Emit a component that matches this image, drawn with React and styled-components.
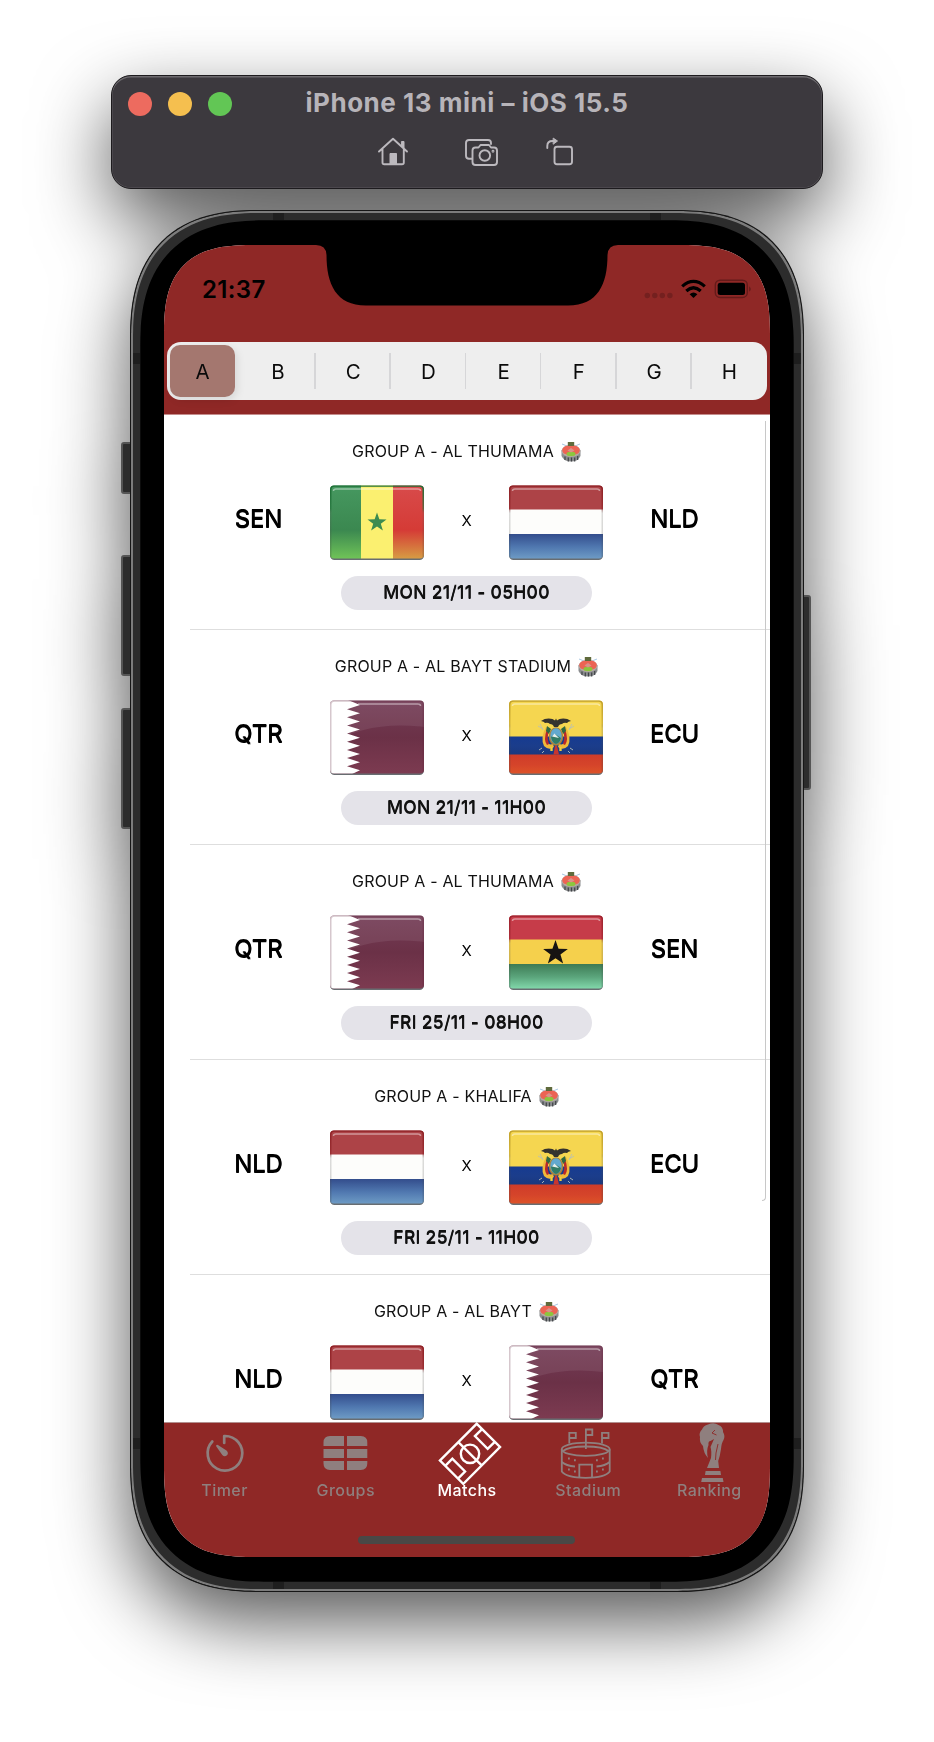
import React from "react";
import styled, { createGlobalStyle } from "styled-components";

const RED = "#8f2826";
const MUTED = "#8f7f7e";

const GlobalStyle = createGlobalStyle`
  * { box-sizing: border-box; }
  html, body { margin: 0; background: #fff; }
  body { font-family: Inter, "Liberation Sans", sans-serif; color: #000; }
  svg { display: block; flex: none; }
`;

const Desktop = styled.main`
  width: 934px;
  height: 1742px;
  padding-top: 75px;
  overflow: hidden;
  background: #fff;
`;

const Simulator = styled.div`
  display: flex;
  flex-direction: column;
  align-items: center;
  gap: 21px;
  filter: drop-shadow(0 30px 37px rgba(0, 0, 0, 0.66));
`;

const WindowBar = styled.header`
  width: 712px;
  height: 114px;
  border-radius: 20px;
  background: #3c393e;
  border: 1px solid #1d1b1e;
  box-shadow: inset 0 1.5px 0 #6d6a6e, inset 0 0 0 0.5px #5a575c;
`;

const TitleRow = styled.div`
  display: grid;
  grid-template-columns: 1fr auto 1fr;
  align-items: center;
  height: 56px;
  padding: 0 16px;
`;

const Lights = styled.div`
  display: flex;
  gap: 16px;
`;

const Light = styled.span`
  width: 24px;
  height: 24px;
  border-radius: 50%;
  background: ${(p) => p.$color};
`;

const WindowTitle = styled.h1`
  margin: -2px 0 0;
  font-size: 26px;
  font-weight: 650;
  letter-spacing: 0.52px;
  line-height: 30px;
  color: #b7b4b9;
  white-space: nowrap;
`;

const ToolRow = styled.div`
  display: flex;
  justify-content: center;
  padding: 4px 0 0 17px;
`;

const ToolIcon = styled.svg`
  width: ${(p) => p.$w}px;
  height: 31px;
  margin-right: ${(p) => p.$gap || 0}px;
  overflow: visible;
  fill: none;
  stroke: #bcb9be;
  stroke-width: 1.9;
  stroke-linejoin: round;
  stroke-linecap: round;
`;

const Phone = styled.section`
  position: relative;
  width: 674px;
  height: 1382px;
  padding: 34px 33px;
  border: 1px solid #161616;
  border-radius: 108px;
  @supports (corner-shape: superellipse(1.3)) {
    border-radius: 128px;
    corner-shape: superellipse(1.3);
  }
  background: #000;
  box-shadow: inset 0 0 0 2px #7c7c7c, inset 0 0 0 9.3px #2c2c2c;
`;

const SideButton = styled.i`
  position: absolute;
  z-index: -1;
  top: ${(p) => p.$top}px;
  ${(p) => p.$side}: ${(p) => (p.$side === "left" ? -10 : -8)}px;
  width: 14px;
  height: ${(p) => p.$h}px;
  border-radius: 3px;
  background: #2c2c2c;
  border: 2px solid #555;
`;

const Antenna = styled.i`
  position: absolute;
  width: ${(p) => (p.$flat ? 11 : 7)}px;
  height: ${(p) => (p.$flat ? 7 : 11)}px;
  background: #1e1e1e;
  ${(p) => p.$v}: ${(p) => p.$y}px;
  ${(p) => p.$h}: ${(p) => p.$x}px;
`;

const Screen = styled.div`
  position: relative;
  display: flex;
  flex-direction: column;
  width: 606px;
  height: 1312px;
  border-radius: 76px;
  @supports (corner-shape: superellipse(1.5)) {
    border-radius: 92px;
    corner-shape: superellipse(1.5);
  }
  overflow: hidden;
  background: #fff;
`;

const Notch = styled.svg`
  position: absolute;
  top: -1px;
  left: 152px;
  width: 302px;
  height: 62px;
`;

const AppHeader = styled.div`
  height: 170px;
  background: ${RED};
  border-bottom: 1px solid #c58d8c;
`;

const StatusBar = styled.div`
  display: flex;
  justify-content: space-between;
  height: 97px;
  padding: 30px 19px 0 38px;
`;

const Clock = styled.span`
  font-size: 24px;
  font-weight: 580;
  line-height: 30px;
  letter-spacing: 0.35px;
`;

const StatusIcons = styled.svg`
  width: 109px;
  height: 30px;
  margin-right: -1px;
`;

const Segments = styled.nav`
  display: flex;
  height: 58px;
  margin: 0 3px;
  border-radius: 14px;
  background: #eee;
`;

const Segment = styled.button`
  position: relative;
  flex: 1;
  padding: 3px 5px 3px ${(p) => (p.$first ? 3 : 5)}px;
  border: 0;
  background: none;
  font: 430 20.5px/53px Inter, sans-serif;
  color: #0a0a0a;
  &::after {
    content: "";
    position: absolute;
    right: 0;
    top: 11px;
    width: 1.5px;
    height: 36px;
    background: ${(p) => (p.$divider ? "#d6d6d8" : "transparent")};
  }
`;

const SegmentLabel = styled.span`
  display: block;
  height: 52px;
  border-radius: 10px;
  background: ${(p) => (p.$on ? "#a4776f" : "transparent")};
  box-shadow: ${(p) => (p.$on ? "2px 3px 8px rgba(0,0,0,.1)" : "none")};
`;

const MatchList = styled.div`
  position: relative;
  flex: 1;
  min-height: 0;
  overflow: hidden;
`;

const ScrollEdge = styled.i`
  position: absolute;
  top: 6px;
  right: 4px;
  width: 4px;
  height: 780px;
  border-right: 1px solid #c8c8c8;
  border-bottom: 1px solid #c8c8c8;
  border-bottom-right-radius: 4px;
`;

const MatchRow = styled.article`
  display: flex;
  flex-direction: column;
  align-items: center;
  height: 215px;
  padding: 26px 1px 0 0;
  background: linear-gradient(#dedede, #dedede) 26px 100% / 100% 1px no-repeat;
`;

const Venue = styled.div`
  display: flex;
  align-items: center;
  gap: 7px;
  height: 21px;
  font-size: 16px;
  letter-spacing: 0.18px;
  line-height: 21px;
  white-space: nowrap;
  color: #111;
`;

const Fixture = styled.div`
  display: grid;
  grid-template-columns: 143px 94px 1fr 94px 143px;
  align-items: center;
  justify-items: center;
  width: 559px;
  height: 75px;
  margin: 23px 0 16px;
`;

const Team = styled.span`
  font-size: 24px;
  font-weight: 480;
  letter-spacing: -0.2px;
  line-height: 30px;
  margin-top: -8px;
  text-shadow: 0 0.9px 0 #000;
`;

const Versus = styled.span`
  font-size: 15px;
  line-height: 20px;
  margin-top: -3px;
`;

const Kickoff = styled.time`
  width: 251px;
  height: 34px;
  border-radius: 17px;
  background: #e4e3e9;
  text-align: center;
  font-size: 17.5px;
  font-weight: 550;
  letter-spacing: 0.3px;
  line-height: 32px;
  color: #111;
  text-shadow: 0 0.8px 0 #111;
`;

const TabBar = styled.nav`
  display: grid;
  grid-template-columns: repeat(5, 1fr);
  grid-template-rows: 113px auto;
  height: 135px;
  background: ${RED};
  box-shadow: inset 0 1px 0 #b28f8e;
  position: relative;
`;

const Tab = styled.button`
  display: flex;
  flex-direction: column;
  align-items: center;
  padding: 0;
  border: 0;
  background: none;
  color: ${(p) => (p.$on ? "#fff" : MUTED)};
  font: 500 16px/20px Inter, sans-serif;
  letter-spacing: 0.45px;
`;

const TabIcon = styled.svg`
  width: 64px;
  height: 58px;
  overflow: visible;
  fill: none;
  stroke: currentColor;
  stroke-width: 1.8;
`;

const HomeIndicator = styled.i`
  grid-column: 1 / -1;
  justify-self: center;
  width: 217px;
  height: 8.5px;
  margin-top: 0.5px;
  border-radius: 5px;
  background: #494846;
`;

const FlagSvg = styled.svg`
  width: 94px;
  height: 75px;
  overflow: visible;
`;

function starPoints(cx, cy, r) {
  return Array.from({ length: 10 }, (_, i) => {
    const a = -Math.PI / 2 + (i * Math.PI) / 5;
    const k = i % 2 ? r * 0.4 : r;
    return `${(cx + k * Math.cos(a)).toFixed(2)},${(cy + k * Math.sin(a)).toFixed(2)}`;
  }).join(" ");
}

const paints = {
  SEN: (id) => (
    <>
      <rect width="31" height="75" fill={`url(#${id}a)`} />
      <rect x="31" width="32" height="75" fill="#fbf070" />
      <rect x="63" width="31" height="75" fill={`url(#${id}b)`} />
      <polygon points={starPoints(47, 37.5, 10)} fill="#3c8c50" />
    </>
  ),
  NLD: (id) => (
    <>
      <rect width="94" height="25" fill="#ad4347" />
      <rect y="24.5" width="94" height="25" fill="#fdfdfb" />
      <rect y="49" width="94" height="26" fill={`url(#${id}a)`} />
    </>
  ),
  QTR: (id) => (
    <>
      <rect width="94" height="75" fill={`url(#${id}a)`} />
      <path d="M0 44Q40 20 94 27V0H0Z" fill="#fff" opacity=".08" />
      <path
        d={
          "M0 0H18L30 5 " +
          Array.from({ length: 9 }, (_, i) => `L17 ${i * 8.15 + 1} L30 ${i * 8.15 + 5.1}`).join(" ") +
          " L20 75H0Z"
        }
        fill="#fff"
      />
    </>
  ),
  ECU: (id) => (
    <>
      <rect width="94" height="37" fill="#f5d650" />
      <rect y="36.5" width="94" height="19" fill={`url(#${id}b)`} />
      <rect y="54.5" width="94" height="20.5" fill={`url(#${id}a)`} />
      <path d="M37 27Q31 38 35 46Q40 51 45 47L44 44Q38 46 38 39Q37 33 41 28Z" fill="#efb93a" />
      <path d="M57 27Q63 38 59 46Q54 51 49 47L50 44Q56 46 56 39Q57 33 53 28Z" fill="#efb93a" />
      <path d="M38 29Q34 40 38 45L40 44Q37 37 41 29ZM56 29Q60 40 56 45L54 44Q57 37 53 29Z" fill="#b9292b" />
      <path d="M38 26L42 29L40 34L37 31ZM56 26L52 29L54 34L57 31Z" fill="#2f6843" />
      <ellipse cx="47" cy="36.5" rx="7.2" ry="9.3" fill="#a8813c" />
      <ellipse cx="47" cy="36" rx="5.7" ry="7.8" fill="#62a9cf" />
      <path d="M42 37L46 34L52 38Q51 43 47 44Q43 43 42 37Z" fill="#327c65" />
      <path d="M43 36.5L45.5 33.5L50 38Z" fill="#e7eeee" />
      <path d="M32 21Q37 17.5 43.5 19L46 20.5L47 18.5L48 20.5L50.5 19Q57 17.5 62 21Q59 21.5 58 23Q55 22 53 24Q50 24 49 27H45Q44 24 41 24Q39 22 36 23Q35 21.5 32 21Z" fill="#34332e" />
      <path d="M46 46H48L50 54.5H44.5Z" fill="#c8352f" />
      <path d="M42.5 47v4M51.5 47v4" stroke="#f0ce3c" strokeWidth="2.4" />
      <path d="M29 26l5 3M31 24l3 6M65 26l-5 3M63 24l-3 6M30 50l3-2M33 53l2-2M64 50l-3-2M61 53l-2-2" stroke="#b9bfb7" strokeWidth=".9" />
    </>
  ),
  GHA: (id) => (
    <>
      <rect width="94" height="25" fill="#c63c49" />
      <rect y="24.5" width="94" height="25" fill="#f5d04c" />
      <rect y="49" width="94" height="26" fill={`url(#${id}a)`} />
      <polygon points={starPoints(46.5, 38, 13)} fill="#161412" />
    </>
  ),
};

const gradients = {
  SEN: [["#469860", "#3b8850 60%", "#72c658"], ["#d84b4b", "#d53b36 60%", "#d7a044"], "#1f6f37"],
  NLD: [["#334d8c", "#5078b0 50%", "#719fc7"], ["#fff", "#fff 50%", "#fff"], "#8f2226"],
  QTR: [["#733c56", "#6b3147 50%", "#7d3b51"], ["#fff", "#fff 50%", "#fff"], "#5a2139"],
  ECU: [["#cf3c29", "#d5442a 50%", "#de5528"], ["#163b91", "#1b3d8b 50%", "#1a387d"], "#c0a02c"],
  GHA: [["#3d7a54", "#5ba57c 50%", "#86deb0"], ["#fff", "#fff 50%", "#fff"], "#9d232e"],
};

function Flag({ code }) {
  const id = React.useId().replace(/[^a-zA-Z0-9]/g, "");
  const [a, b, edge] = gradients[code];
  const stops = (list) =>
    list.map((s, i) => (
      <stop key={i} offset={i === 0 ? "0" : i === 2 ? "1" : s.split(" ")[1]} stopColor={s.split(" ")[0]} />
    ));
  return (
    <FlagSvg viewBox="0 0 94 75">
      <defs>
        <clipPath id={`${id}c`}><rect y=".4" width="94" height="73" rx="4" /></clipPath>
        <linearGradient id={`${id}a`} x2="0" y2="1">{stops(a)}</linearGradient>
        <linearGradient id={`${id}b`} x2="0" y2="1">{stops(b)}</linearGradient>
        <linearGradient id={`${id}e`} x2="0" y2="1">
          <stop offset="0" stopColor={edge} />
          <stop offset=".3" stopColor={edge} stopOpacity=".6" />
          <stop offset=".36" stopColor="#555" stopOpacity=".2" />
          <stop offset="1" stopColor="#333" stopOpacity=".22" />
        </linearGradient>
      </defs>
      <rect y="2.5" width="94" height="72.6" rx="4.5" fill="#4d5358" opacity=".85" />
      <g clipPath={`url(#${id}c)`}>
        {paints[code](id)}
        <rect x=".5" y=".8" width="93" height="76" rx="4" fill="none" stroke={code === "QTR" ? "#5a213940" : `url(#${id}e)`} strokeWidth="2" />
        <path d={code === "QTR" ? "M28 4H88Q90.5 4 90.5 6" : "M3.5 6Q3.5 4 6 4H88Q90.5 4 90.5 6"} fill="none" stroke="#fff" strokeOpacity=".45" strokeWidth="1.5" />
      </g>
    </FlagSvg>
  );
}

function StadiumGlyph() {
  return (
    <svg width="20" height="21" viewBox="0 0 20 21">
      <path d="M1 3L6 5M19 3L14 5" stroke="#a9c7e2" strokeWidth="1" />
      <path d="M.5 9V15Q3 20.5 10 20.5T19.5 15V9Z" fill="#8b8d8f" />
      <path d="M4 15.5v3.5M7.3 16.500v4M10.5 16.5v4M13.7 16.5v4M16.7 15v4" stroke="#414448" strokeWidth="1.2" />
      <ellipse cx="10" cy="10" rx="9.5" ry="6" fill="#b7aaa5" />
      <path d="M1.2 9Q2 4.5 8 4.5H12Q18 4.5 18.8 9Q18.5 13 14 13.5L10 11L6 13.5Q1.5 13 1.2 9Z" fill="#ec6454" />
      <ellipse cx="10" cy="13" rx="4.5" ry="2.2" fill="#8cc63d" />
      <rect x="6.8" y="1" width="6.4" height="4" fill="#5f6a3c" />
      <path d="M6.5 9.5L10 7L13.5 9.5L10 11.5Z" fill="#d9938a" />
    </svg>
  );
}

const tabIcons = {
  Timer: (
    <>
      <path d="M31.2 21V14A17.3 17.3 0 1 1 19.3 19.5" strokeWidth="2.7" strokeLinecap="round" strokeLinejoin="round" />
      <path d="M23.3 23.2Q23.9 22.4 24.9 23L33.5 28.5Q36 31 34 33.3Q31.5 35.2 29.3 33L23.3 24.5Q22.8 23.7 23.3 23.2Z" fill="currentColor" stroke="none" />
    </>
  ),
  Groups: (
    <path
      d="M16 14H30V24H9.5V20.5Q9.5 14 16 14ZM33 14H46.8Q53.3 14 53.3 20.5V24H33ZM9.5 27H30V36H9.5ZM33 27H53.3V36H33ZM9.5 39H30V48H16Q9.5 48 9.5 41.5ZM33 39H53.3V41.5Q53.3 48 46.8 48H33Z"
      fill="currentColor"
      stroke="none"
    />
  ),
  Matchs: (
    <g transform="translate(35 31.8) rotate(-45)" strokeWidth="2.4">
      <rect x="-26" y="-16.5" width="52" height="33" />
      <path d="M0-16.5V16.5M-26-9H-16V9H-26M26-9H16V9H26" />
      <circle r="9.2" />
    </g>
  ),
  Stadium: (
    <>
      <path d="M5.8 27.3V49.5Q10 55.6 29.7 55.8Q49.5 55.6 53.7 49.5V27.3" />
      <ellipse cx="29.7" cy="27.3" rx="24" ry="6.6" />
      <path d="M7 29Q12 24.5 29.7 24.5T52.5 29" />
      <path d="M5.8 40Q10 43.8 19 44.5M53.7 40Q49.5 43.8 40.5 44.5" />
      <path d="M23.3 55.5V42.7H36V55.5" />
      <path d="M13.3 21.5V10.9H19.8V16H13.3M29.9 27V7.5H36.3V13H29.9M46 21.5V10.9H52.5V16H46" />
      <path d="M12 36.5h1.8M18 38.3h1.8M40 38.3h1.8M46 36.5h1.8M12 47.5h1.8M18 49.5h1.8M40 49.5h1.8M46 47.5h1.8" strokeWidth="1.9" />
    </>
  ),
  Ranking: (
    <g fill="currentColor" stroke="none">
      <path d="M31 2.5Q37 0 41.5 3Q46 4.5 46 10Q48.5 14 46.5 18Q44.5 21 44 27Q43 34 41.2 39L42 46H30L34 36Q34.8 29 33.5 25L37 17L33.5 19Q31 19 31.5 23Q29 29 31 36Q26.5 31 26 24Q22 20 23 15Q21.5 11 25 7.5Q26.5 3.5 31 2.5Z" />
      <path d="M28.6 49H43.4L44 53H28ZM25 56H45.8L46.5 60H24.2Z" />
      <path d="M38 8L35 11L39.5 13M41 22L39 31L38.5 38" fill="none" stroke={RED} strokeWidth=".9" />
    </g>
  ),
};

const matches = [
  ["AL THUMAMA", "SEN", "SEN", "NLD", "NLD", "MON 21/11 - 05H00"],
  ["AL BAYT STADIUM", "QTR", "QTR", "ECU", "ECU", "MON 21/11 - 11H00"],
  ["AL THUMAMA", "QTR", "QTR", "GHA", "SEN", "FRI 25/11 - 08H00"],
  ["KHALIFA", "NLD", "NLD", "ECU", "ECU", "FRI 25/11 - 11H00"],
  ["AL BAYT", "NLD", "NLD", "QTR", "QTR", null],
];

function Match({ data }) {
  const [venue, home, homeFlag, awayFlag, away, time] = data;
  return (
    <MatchRow>
      <Venue>
        <span>GROUP A - {venue}</span>
        <StadiumGlyph />
      </Venue>
      <Fixture>
        <Team>{home}</Team>
        <Flag code={homeFlag} />
        <Versus>X</Versus>
        <Flag code={awayFlag} />
        <Team>{away}</Team>
      </Fixture>
      {time && <Kickoff>{time}</Kickoff>}
    </MatchRow>
  );
}

export default function App() {
  return (
    <Desktop>
      <GlobalStyle />
      <Simulator>
        <WindowBar>
          <TitleRow>
            <Lights>
              <Light $color="#ed6b5f" />
              <Light $color="#f5bf4f" />
              <Light $color="#62c655" />
            </Lights>
            <WindowTitle>iPhone 13 mini – iOS 15.5</WindowTitle>
          </TitleRow>
          <ToolRow>
            <ToolIcon $w={30} $gap={57} viewBox="0 0 30 31">
              <path d="M1 15.5L15 2.8L29 15.5M4.5 13V26.5Q4.5 28.3 6.3 28.3H24Q25.8 28.3 25.8 26.5V13" />
              <path d="M23.8 5.5H26V12L23.8 10Z" fill="#bcb9be" strokeWidth="1" />
              <path d="M12 28V17.5H18.5V28Z" fill="#bcb9be" strokeWidth="1" />
            </ToolIcon>
            <ToolIcon $w={33} $gap={48} viewBox="0 0 33 31">
              <path d="M7 22.8H4Q1 22.8 1 19.8V7Q1 4 4 4H23Q26 4 26 7V8" />
              <path d="M10.5 11.5H13.5L15.5 9H24L26 11.5H29Q32 11.5 32 14.5V26Q32 29 29 29H10.5Q7.5 29 7.5 26V14.5Q7.5 11.5 10.5 11.5Z" />
              <circle cx="19.8" cy="19.5" r="5.3" />
              <circle cx="28" cy="15.3" r=".5" />
            </ToolIcon>
            <ToolIcon $w={27} viewBox="0 0 27 31">
              <rect x="8.5" y="10.8" width="17.5" height="17.5" rx="2.5" />
              <path d="M1.3 12V10Q1.3 5 6.5 5H8" />
              <path d="M7.5 2.3L11.5 5L7.5 8Z" fill="#bcb9be" strokeWidth="1" />
            </ToolIcon>
          </ToolRow>
        </WindowBar>

        <Phone>
          <SideButton $side="left" $top={231} $h={52} />
          <SideButton $side="left" $top={344} $h={121} />
          <SideButton $side="left" $top={497} $h={121} />
          <SideButton $side="right" $top={384} $h={195} />
          <Antenna $flat $v="top" $y={2} $h="left" $x={142} />
          <Antenna $flat $v="top" $y={2} $h="right" $x={142} />
          <Antenna $flat $v="bottom" $y={2} $h="left" $x={142} />
          <Antenna $flat $v="bottom" $y={2} $h="right" $x={142} />
          <Antenna $v="top" $y={142} $h="left" $x={2} />
          <Antenna $v="top" $y={142} $h="right" $x={2} />
          <Antenna $v="bottom" $y={142} $h="left" $x={2} />
          <Antenna $v="bottom" $y={142} $h="right" $x={2} />
          <Screen>
            <AppHeader>
              <StatusBar>
                <Clock>21:37</Clock>
                <StatusIcons viewBox="0 0 109 30">
                  <g fill="#74201f">
                    <circle cx="4.3" cy="20.5" r="2.7" />
                    <circle cx="11.8" cy="20.5" r="2.7" />
                    <circle cx="19.3" cy="20.5" r="2.7" />
                    <circle cx="26.9" cy="20.5" r="2.7" />
                  </g>
                  <g fill="none" stroke="#000" strokeWidth="3.2">
                    <path d="M39.2 11.4Q50.5 1.5 61.8 11.4" />
                    <path d="M43.3 16Q50.5 9.5 57.7 16" />
                  </g>
                  <path d="M46.6 19.2Q50.5 16 54.4 19.2L50.5 23Z" />
                  <rect x="72.3" y="5.2" width="32" height="17.3" rx="4.8" fill="none" stroke="#651b1a" strokeWidth="1.4" />
                  <rect x="74.7" y="7.8" width="27.3" height="12.2" rx="2.5" />
                  <path d="M106.3 11.2Q109 14 106.3 16.7Z" fill="#5b1918" />
                </StatusIcons>
              </StatusBar>
              <Segments>
                {"ABCDEFGH".split("").map((letter, i) => (
                  <Segment key={letter} $first={i === 0} $divider={i > 0 && i < 7}>
                    <SegmentLabel $on={i === 0}>{letter}</SegmentLabel>
                  </Segment>
                ))}
              </Segments>
            </AppHeader>
            <MatchList>
              {matches.map((m, i) => (
                <Match key={i} data={m} />
              ))}
              <ScrollEdge />
            </MatchList>
            <TabBar>
              {Object.keys(tabIcons).map((name) => (
                <Tab key={name} $on={name === "Matchs"}>
                  <TabIcon viewBox="0 0 64 58">{tabIcons[name]}</TabIcon>
                  {name}
                </Tab>
              ))}
              <HomeIndicator />
            </TabBar>
            <Notch viewBox="0 0 302 62">
              <path d="M0 0V1Q10 1 10.5 11C10.5 40 20 61.5 50 61.5H252C282 61.5 291.5 40 291.5 11Q292 1 302 1V0Z" />
            </Notch>
          </Screen>
        </Phone>
      </Simulator>
    </Desktop>
  );
}
